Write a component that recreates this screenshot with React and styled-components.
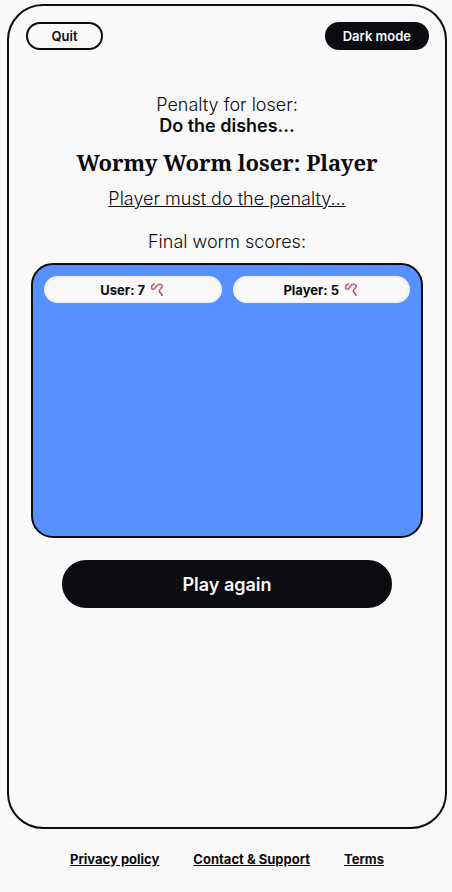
import React from 'react';
import styled, { createGlobalStyle } from 'styled-components';

const INK = '#0b0c10';
const PAPER = '#f9f9f9';
const BLUE = '#5790ff';

const GlobalStyle = createGlobalStyle`
  * {
    box-sizing: border-box;
  }
  body {
    margin: 0;
    background: ${PAPER};
    color: ${INK};
    font-family: Inter, sans-serif;
    font-size: 18px;
    font-weight: 300;
    line-height: 21px;
  }
  h1, p {
    margin: 0;
  }
`;

const Page = styled.div`
  display: flex;
  flex-direction: column;
  min-height: 100vh;
  padding: 4px 5px 0 7px;
`;

const Frame = styled.main`
  display: flex;
  flex: 1;
  flex-direction: column;
  border: 2px solid ${INK};
  border-radius: 36px;
  padding: 16px 22px;
`;

const TopBar = styled.header`
  display: flex;
  justify-content: space-between;
  margin: 0 -6px 44px -5px;
`;

const Button = styled.button`
  background: ${(props) => props.$filled ? INK : PAPER};
  color: ${(props) => props.$filled ? PAPER : INK};
  border: 2px solid ${INK};
  border-radius: 24px;
  font-family: inherit;
  cursor: pointer;
  &:hover {
    opacity: 0.8;
  }
`;

const SmallButton = styled(Button)`
  height: 28px;
  min-width: 77px;
  padding: 0 16px;
  font-size: 13px;
  font-weight: 600;
`;

const PlayButton = styled(Button)`
  align-self: center;
  width: 100%;
  max-width: 330px;
  height: 48px;
  margin-top: 22px;
  font-size: 18px;
  font-weight: 600;
`;

const Result = styled.section`
  display: flex;
  flex-direction: column;
  text-align: center;
`;

const Penalty = styled.strong`
  display: block;
  font-weight: 600;
`;

const Title = styled.h1`
  margin: 11px 0;
  font-family: 'Noto Serif', 'Droid Serif', serif;
  font-size: 22px;
  font-weight: 700;
  line-height: 30px;
`;

const Verdict = styled.p`
  margin-bottom: 22px;
  text-decoration: underline;
`;

const Scores = styled.ul`
  display: grid;
  grid-template-columns: 1fr 1fr;
  align-content: start;
  gap: 11px;
  min-height: 275px;
  margin: 11px 0 0;
  padding: 11px;
  list-style: none;
  background: ${BLUE};
  border: 2px solid ${INK};
  border-radius: 22px;
`;

const Score = styled.li`
  display: flex;
  align-items: center;
  justify-content: center;
  gap: 5px;
  height: 27px;
  background: ${PAPER};
  border: 2px solid #f1f1f3;
  border-radius: 14px;
  font-size: 13px;
  font-weight: 700;
  line-height: 24px;
`;

const Footer = styled.footer`
  display: flex;
  justify-content: center;
  gap: 34px;
  padding: 20px 0 22px;
`;

const FooterLink = styled.a`
  color: ${INK};
  font-size: 13px;
  font-weight: 700;
`;

const Worm = () => (
  <svg width="15" height="15" viewBox="0 0 15 15" fill="none" aria-hidden="true">
    <path
      d="M4.3 1.9C2.4 2.6 1.4 4 1.6 5.9C1.8 7.8 3.9 7.7 5 6.2L7.2 3.3C8.5 1.7 11.8 1.8 12.2 4C12.5 6 9.4 6.8 9.3 9C9.3 11.2 12 10.6 11.9 13.3"
      stroke="#c4607a"
      strokeWidth="1.6"
      strokeLinecap="round"
    />
    <path d="M9.3 9.2C9.4 11.2 12 10.8 11.9 13.3" stroke="#a23c63" strokeWidth="1" strokeLinecap="round" />
  </svg>
);

const players = [
  { name: 'User', score: 7 },
  { name: 'Player', score: 5 },
];

export default function App() {
  return (
    <Page>
      <GlobalStyle />
      <Frame>
        <TopBar>
          <SmallButton type="button">Quit</SmallButton>
          <SmallButton type="button" $filled>Dark mode</SmallButton>
        </TopBar>
        <Result>
          <p>
            Penalty for loser:
            <Penalty>Do the dishes...</Penalty>
          </p>
          <Title>Wormy Worm loser: Player</Title>
          <Verdict>Player must do the penalty...</Verdict>
          <p>Final worm scores:</p>
          <Scores>
            {players.map(({ name, score }) => (
              <Score key={name}>
                {name}: {score}
                <Worm />
              </Score>
            ))}
          </Scores>
          <PlayButton type="button" $filled>Play again</PlayButton>
        </Result>
      </Frame>
      <Footer>
        <FooterLink href="#privacy">Privacy policy</FooterLink>
        <FooterLink href="#contact">Contact &amp; Support</FooterLink>
        <FooterLink href="#terms">Terms</FooterLink>
      </Footer>
    </Page>
  );
}
